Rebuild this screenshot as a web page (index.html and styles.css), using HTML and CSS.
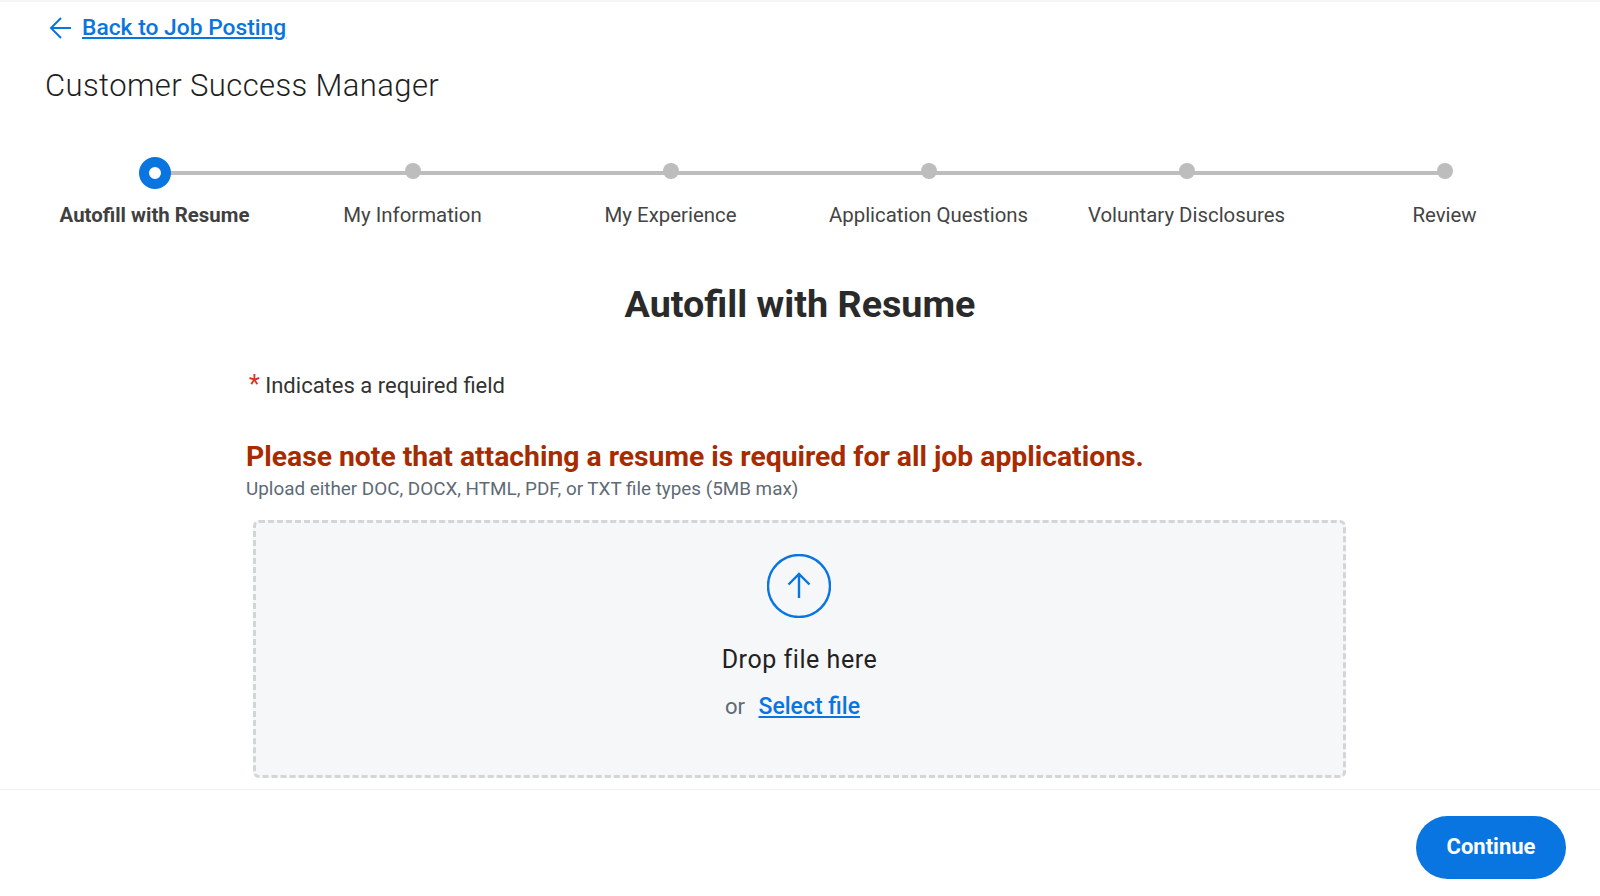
FILE: index.html
```html
<!DOCTYPE html>
<html lang="en">
<head>
<meta charset="utf-8">
<title>Autofill with Resume</title>
<link rel="stylesheet" href="styles.css">
</head>
<body>
<div class="page">
  <main class="main">
    <nav class="back">
      <svg class="back-icon" viewBox="0 0 24 24" width="24" height="24" fill="none" stroke="#0875e1" stroke-width="2"><path d="M23 12H3M13 2L3 12l10 10"/></svg>
      <a href="#" class="back-link">Back to Job Posting</a>
    </nav>
    <h2 class="job-title">Customer Success Manager</h2>
    <ol class="stepper">
      <li class="step active"><span class="marker"><span class="dot"></span></span><span class="label">Autofill with Resume</span></li>
      <li class="step"><span class="marker"><span class="dot"></span></span><span class="label">My Information</span></li>
      <li class="step"><span class="marker"><span class="dot"></span></span><span class="label">My Experience</span></li>
      <li class="step"><span class="marker"><span class="dot"></span></span><span class="label">Application Questions</span></li>
      <li class="step"><span class="marker"><span class="dot"></span></span><span class="label">Voluntary Disclosures</span></li>
      <li class="step"><span class="marker"><span class="dot"></span></span><span class="label">Review</span></li>
    </ol>
    <h1 class="heading">Autofill with Resume</h1>
    <section class="form">
      <p class="required"><span class="star">*</span> Indicates a required field</p>
      <p class="notice">Please note that attaching a resume is required for all job applications.</p>
      <p class="hint">Upload either DOC, DOCX, HTML, PDF, or TXT file types (5MB max)</p>
      <div class="drop">
        <svg class="upload-icon" viewBox="0 0 64 64" width="64" height="64" fill="none" stroke="#0875e1" stroke-width="2.400"><circle cx="32" cy="32" r="31"/><path d="M32 44V20M21.500 30.500L32 20l10.500 10.500"/></svg>
        <p class="drop-title">Drop file here</p>
        <p class="drop-or">or <a href="#" class="select">Select file</a></p>
      </div>
    </section>
  </main>
  <footer class="footer"><button class="continue" type="button">Continue</button></footer>
</div>
</body>
</html>
```
FILE: styles.css
```css
* { box-sizing: border-box; }
html, body { margin: 0; height: 100%; }
body { font-family: Roboto, "Liberation Sans", sans-serif; background: #fff; color: #333; overflow: hidden; }
p, h1, h2, ol { margin: 0; padding: 0; }
.page { height: 896px; display: flex; flex-direction: column; border-top: 2px solid #f5f5f5; }
.main { height: 787px; overflow: hidden; }
.back { display: flex; align-items: center; gap: 10px; padding: 10px 0 0 48px; height: 42px; }
.back-link { font-size: 22.800px; font-weight: 500; color: #0875e1; text-decoration: underline; line-height: 24px; }
.job-title { font-size: 31px; font-weight: 300; color: #1e1e1e; letter-spacing: 0.4px; padding: 24px 0 0 45px; line-height: 36px; }
.stepper { list-style: none; display: grid; grid-template-columns: repeat(6, 258px); padding: 53px 0 0 25.500px; }
.step { display: flex; flex-direction: column; align-items: center; position: relative; }
.step::before { content: ""; position: absolute; top: 14px; left: 50%; width: 100%; height: 4px; background: #bdbdbd; }
.step:last-child::before { display: none; }
.marker { height: 32px; display: flex; align-items: center; justify-content: center; position: relative; }
.dot { width: 16px; height: 16px; border-radius: 50%; background: #bdbdbd; margin-top: -5px; }
.active .dot { width: 32px; height: 32px; margin-top: 0; background: #fff; border: 10px solid #0875e1; }
.label { font-size: 20.400px; line-height: 24px; color: #444; margin-top: 14px; white-space: nowrap; }
.active .label { font-weight: 700; color: #404040; }
.heading { font-size: 37.700px; font-weight: 700; color: #2a2a2a; text-align: center; line-height: 44px; margin: 55px 0 0; }
.form { padding: 0 0 0 246px; }
.required { font-size: 22px; font-weight: 400; color: #333; line-height: 26px; margin: 47px 0 0 3px; }
.star { color: #de2e21; font-size: 25px; line-height: 0; }
.notice { font-size: 28.300px; font-weight: 700; color: #a82b00; line-height: 34px; margin-top: 41px; white-space: nowrap; }
.hint { font-size: 18.850px; color: #5e6a75; line-height: 24px; margin-top: 3px; white-space: nowrap; }
.drop { width: 1093px; height: 258px; margin: 19px 0 0 7px; background: #f6f7f9; border: 3px dashed #d3d5d8; border-radius: 6px; display: flex; flex-direction: column; align-items: center; padding-top: 31px; }
.upload-icon { display: block; margin-right: 1px; }
.drop-title { font-size: 25px; font-weight: 400; letter-spacing: 0.55px; color: #222; line-height: 30px; margin-top: 27px; }
.drop-or { font-size: 22px; color: #5e6a75; line-height: 26px; margin-top: 19px; word-spacing: 8px; }
.select { font-size: 23px; font-weight: 500; color: #0875e1; text-decoration: underline; word-spacing: 0; margin-right: 14px; }
.footer { flex: 1; border-top: 1px solid #f0f1f2; display: flex; justify-content: flex-end; align-items: flex-start; padding: 26px 34px 0 0; }
.continue { width: 150px; height: 63px; border: 0; border-radius: 32px; background: #0875e1; color: #fff; padding: 0 0 2px; font: 700 22px Roboto, "Liberation Sans", sans-serif; }
```
